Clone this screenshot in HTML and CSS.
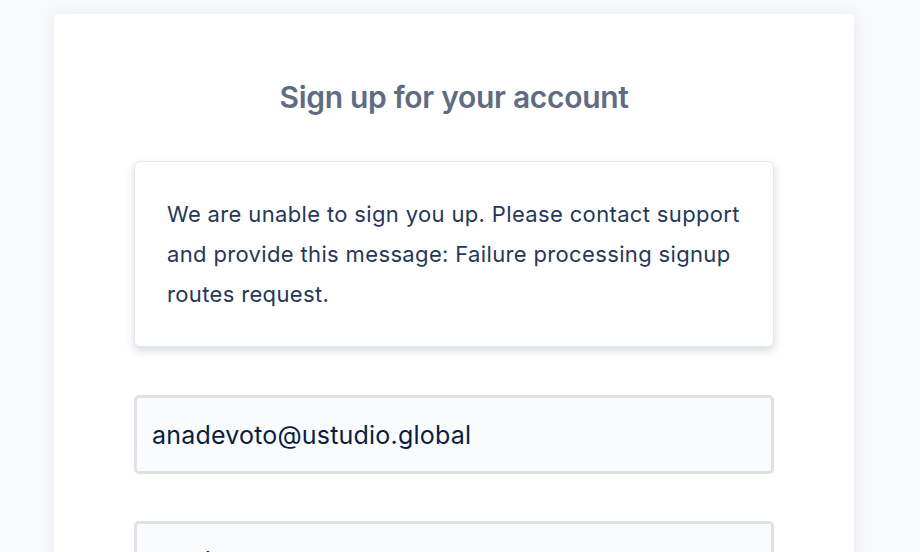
FILE: index.html
```html
<!DOCTYPE html>
<html lang="en">
<head>
    <meta charset="UTF-8">
    <meta name="viewport" content="width=device-width, initial-scale=1.0">
    <title>Sign up</title>
    <link rel="stylesheet" href="styles.css">
</head>
<body>
    <div class="card">
        <h1>Sign up for your account</h1>
        <div class="error">
            We are unable to sign you up. Please contact support and provide this message: Failure processing signup routes request.
        </div>
        <form class="fields">
            <input type="email" class="field" value="anadevoto@ustudio.global">
            <input type="text" class="field" value="anadevoto">
        </form>
    </div>
</body>
</html>
```

FILE: styles.css
```css
body {
    margin: 0;
    background-color: #f8f9fb;
    font-family: Inter, "Noto Sans", sans-serif;
    overflow: hidden;
}
.card {
    width: 800px;
    margin: 14px 0 0 54px;
    background-color: white;
    border-radius: 4px;
    box-shadow: 0 0 16px rgba(9, 30, 66, 0.07);
    padding: 65px 80px 40px;
    box-sizing: border-box;
    height: 700px;
}
h1 {
    margin: 0;
    text-align: center;
    color: #5e6c84;
    font-size: 30px;
    font-weight: 600;
    letter-spacing: -0.3px;
    line-height: 36px;
}
.error {
    margin-top: 46px;
    border: 1px solid #e4e6ea;
    border-radius: 6px;
    box-shadow: 0 4px 10px rgba(9, 30, 66, 0.16);
    padding: 32px 22px 32px 32px;
    color: #253858;
    font-size: 22px;
    letter-spacing: 0.35px;
    line-height: 40px;
}
.fields {
    margin-top: 48px;
}
.field {
    display: block;
    width: 100%;
    box-sizing: border-box;
    height: 79px;
    margin-bottom: 47px;
    border: 3px solid #dfe1e6;
    border-radius: 5px;
    background-color: #fafbfc;
    padding: 0 15px;
    font-family: Inter, "Noto Sans", sans-serif;
    font-size: 25px;
    letter-spacing: 0.2px;
    color: #091e42;
}
```
